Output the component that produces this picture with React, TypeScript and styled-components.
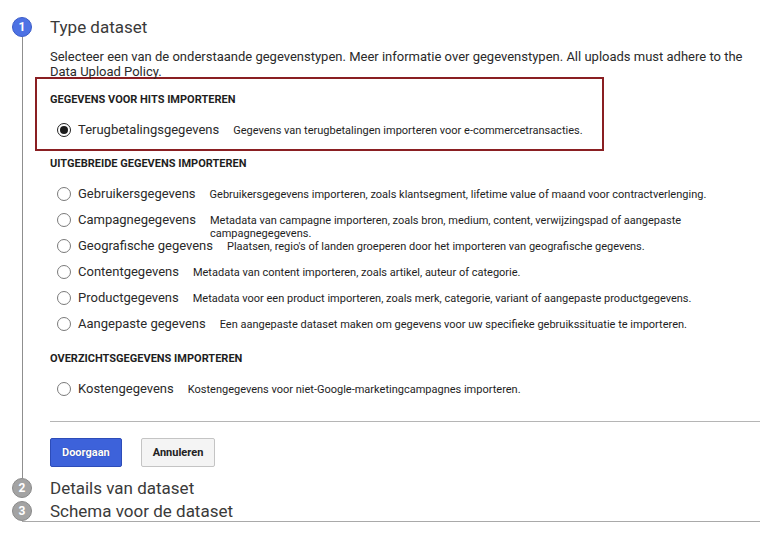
import React, { useState } from 'react';
import styled, { createGlobalStyle } from 'styled-components';

const GlobalStyle = createGlobalStyle`
  html, body {
    margin: 0;
    padding: 0;
    background: #ffffff;
    font-family: Roboto, "Liberation Sans", Arial, sans-serif;
    color: #222222;
  }
`;

/* ── Stepper ── */

const Page = styled.div`
  width: 760px;
  padding-top: 17px;
  overflow: hidden;
`;

const Step = styled.div`
  display: grid;
  grid-template-columns: 50px 1fr;
`;

const Rail = styled.div`
  display: flex;
  flex-direction: column;
  align-items: flex-start;
`;

const StepBadge = styled.div<{ $active?: boolean }>`
  width: 20px;
  height: 20px;
  margin-left: 12px;
  border-radius: 50%;
  box-sizing: border-box;
  border: 1px solid ${({ $active }) => ($active ? '#3b5cc8' : '#8a8a8a')};
  background: ${({ $active }) => ($active ? '#4d72e4' : '#a3a3a3')};
  color: #ffffff;
  font-size: 12px;
  font-weight: 700;
  line-height: 18px;
  text-align: center;
  flex-shrink: 0;
`;

const RailLine = styled.div`
  flex: 1;
  width: 1px;
  margin-left: 21.5px;
  background: #8f8f8f;
`;

const StepTitle = styled.div`
  font-size: 17px;
  line-height: 20px;
  color: #3a3a3a;
  height: 20px;
`;

const StepBody = styled.div`
  padding-right: 15px;
  padding-bottom: 11px;
`;

const Intro = styled.p`
  margin: 12px 0 0;
  font-size: 13px;
  line-height: 15px;
  color: #2a2a2a;
`;

/* ── Groups ── */

const Highlight = styled.section`
  width: 569px;
  box-sizing: border-box;
  margin: -2px 0 0 -15px;
  padding: 14px 0 0 13px;
  border: 2px solid #8a1f22;
`;

const Group = styled.section<{ $top: number }>`
  margin-top: ${({ $top }) => $top}px;
`;

const GroupTitle = styled.div`
  font-size: 11px;
  font-weight: 700;
  line-height: 13px;
  text-transform: uppercase;
  color: #1e1e1e;
  margin-bottom: 17px;
`;

const OptionRow = styled.label`
  display: flex;
  align-items: flex-start;
  height: 26px;
  padding-left: 7px;
  cursor: pointer;
`;

const RadioCircle = styled.span<{ $checked: boolean }>`
  width: 14px;
  height: 14px;
  box-sizing: border-box;
  border-radius: 50%;
  border: 1px solid ${({ $checked }) => ($checked ? '#222' : '#7a7a7a')};
  display: flex;
  align-items: center;
  justify-content: center;
  flex-shrink: 0;

  &::after {
    content: '';
    width: 8px;
    height: 8px;
    border-radius: 50%;
    background: #1c1c1c;
    display: ${({ $checked }) => ($checked ? 'block' : 'none')};
  }
`;

const OptionLabel = styled.span`
  font-size: 13px;
  line-height: 14px;
  color: #2a2a2a;
  margin-left: 7px;
  white-space: nowrap;
`;

const OptionHint = styled.span`
  font-size: 11px;
  line-height: 13px;
  color: #1e1e1e;
  margin-left: 14px;
  margin-top: 1px;
  flex: 1;
`;

const Divider = styled.hr`
  border: none;
  height: 1px;
  background: #b5b5b5;
  margin: 13px -15px 16px 0;
`;

const Actions = styled.div`
  display: flex;
  gap: 19px;
`;

const Button = styled.button<{ $primary?: boolean }>`
  box-sizing: border-box;
  height: 29px;
  padding: 0 11px;
  border-radius: 2px;
  font-family: inherit;
  font-size: 11px;
  font-weight: 700;
  cursor: pointer;
  border: 1px solid ${({ $primary }) => ($primary ? '#2d4cb8' : '#c4c4c4')};
  background: ${({ $primary }) => ($primary ? '#3d62da' : '#f4f4f4')};
  color: ${({ $primary }) => ($primary ? '#ffffff' : '#222222')};
  text-shadow: ${({ $primary }) => ($primary ? '0 0 1px #1a2f80' : 'none')};
`;

const StepGap = styled.div`
  height: 3px;
`;

const BottomRule = styled.div`
  height: 1px;
  background: #a9a9a9;
  margin: 0 0 0 22px;
`;

/* ── Data ── */

interface Option {
  id: string;
  label: string;
  hint: string;
}

const hitOptions: Option[] = [
  {
    id: 'refund',
    label: 'Terugbetalingsgegevens',
    hint: 'Gegevens van terugbetalingen importeren voor e-commercetransacties.',
  },
];

const extendedOptions: Option[] = [
  {
    id: 'user',
    label: 'Gebruikersgegevens',
    hint: 'Gebruikersgegevens importeren, zoals klantsegment, lifetime value of maand voor contractverlenging.',
  },
  {
    id: 'campaign',
    label: 'Campagnegegevens',
    hint: 'Metadata van campagne importeren, zoals bron, medium, content, verwijzingspad of aangepaste campagnegegevens.',
  },
  {
    id: 'geo',
    label: 'Geografische gegevens',
    hint: "Plaatsen, regio's of landen groeperen door het importeren van geografische gegevens.",
  },
  {
    id: 'content',
    label: 'Contentgegevens',
    hint: 'Metadata van content importeren, zoals artikel, auteur of categorie.',
  },
  {
    id: 'product',
    label: 'Productgegevens',
    hint: 'Metadata voor een product importeren, zoals merk, categorie, variant of aangepaste productgegevens.',
  },
  {
    id: 'custom',
    label: 'Aangepaste gegevens',
    hint: 'Een aangepaste dataset maken om gegevens voor uw specifieke gebruikssituatie te importeren.',
  },
];

const summaryOptions: Option[] = [
  {
    id: 'cost',
    label: 'Kostengegevens',
    hint: 'Kostengegevens voor niet-Google-marketingcampagnes importeren.',
  },
];

/* ── Component ── */

const App: React.FC = () => {
  const [selected, setSelected] = useState('refund');

  const renderOptions = (options: Option[]) =>
    options.map((o) => (
      <OptionRow key={o.id} onClick={() => setSelected(o.id)}>
        <RadioCircle $checked={selected === o.id} />
        <OptionLabel>{o.label}</OptionLabel>
        <OptionHint>{o.hint}</OptionHint>
      </OptionRow>
    ));

  return (
    <>
      <GlobalStyle />
      <Page>
        <Step>
          <Rail>
            <StepBadge $active>1</StepBadge>
            <RailLine />
          </Rail>
          <div>
            <StepTitle>Type dataset</StepTitle>
            <StepBody>
              <Intro>
                Selecteer een van de onderstaande gegevenstypen. Meer informatie over gegevenstypen. All
                uploads must adhere to the Data Upload Policy.
              </Intro>
              <Highlight>
                <GroupTitle>Gegevens voor hits importeren</GroupTitle>
                {renderOptions(hitOptions)}
              </Highlight>
              <Group $top={6}>
                <GroupTitle>Uitgebreide gegevens importeren</GroupTitle>
                {renderOptions(extendedOptions)}
              </Group>
              <Group $top={9}>
                <GroupTitle>Overzichtsgegevens importeren</GroupTitle>
                {renderOptions(summaryOptions)}
              </Group>
              <Divider />
              <Actions>
                <Button $primary>Doorgaan</Button>
                <Button>Annuleren</Button>
              </Actions>
            </StepBody>
          </div>
        </Step>
        <Step>
          <Rail>
            <StepBadge>2</StepBadge>
          </Rail>
          <StepTitle>Details van dataset</StepTitle>
        </Step>
        <StepGap />
        <Step>
          <Rail>
            <StepBadge>3</StepBadge>
          </Rail>
          <StepTitle>Schema voor de dataset</StepTitle>
        </Step>
        <BottomRule />
      </Page>
    </>
  );
};

export default App;
